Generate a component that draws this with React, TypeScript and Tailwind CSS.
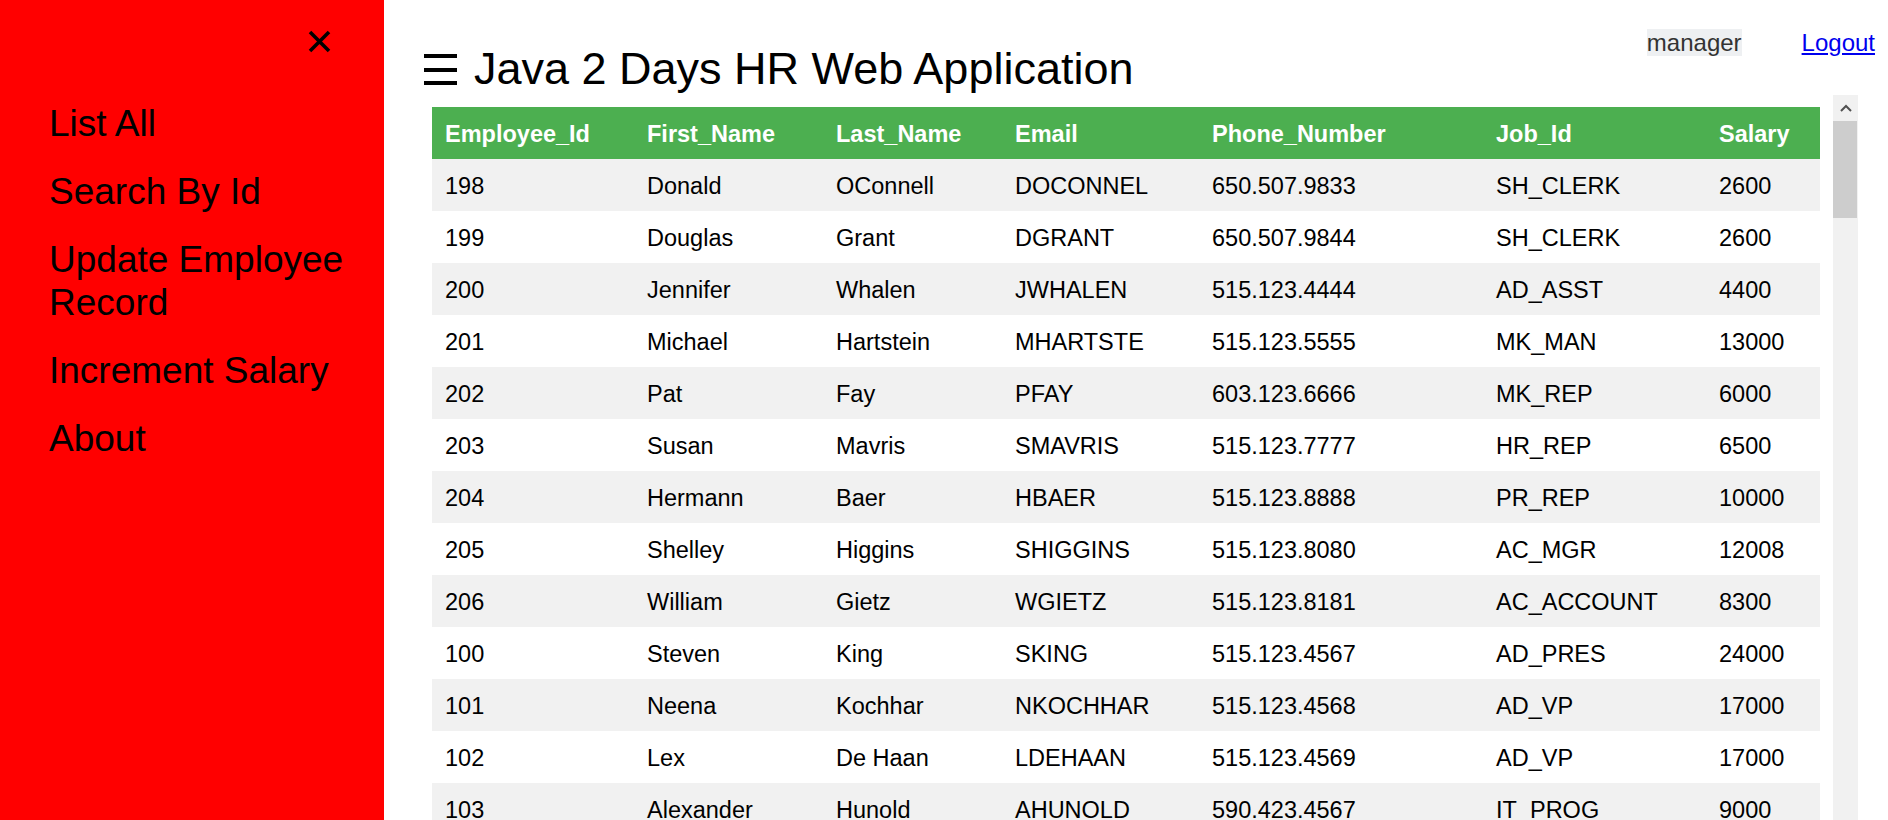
const employees: [string, string, string, string, string, string, string][] = [
  ["198", "Donald", "OConnell", "DOCONNEL", "650.507.9833", "SH_CLERK", "2600"],
  ["199", "Douglas", "Grant", "DGRANT", "650.507.9844", "SH_CLERK", "2600"],
  ["200", "Jennifer", "Whalen", "JWHALEN", "515.123.4444", "AD_ASST", "4400"],
  ["201", "Michael", "Hartstein", "MHARTSTE", "515.123.5555", "MK_MAN", "13000"],
  ["202", "Pat", "Fay", "PFAY", "603.123.6666", "MK_REP", "6000"],
  ["203", "Susan", "Mavris", "SMAVRIS", "515.123.7777", "HR_REP", "6500"],
  ["204", "Hermann", "Baer", "HBAER", "515.123.8888", "PR_REP", "10000"],
  ["205", "Shelley", "Higgins", "SHIGGINS", "515.123.8080", "AC_MGR", "12008"],
  ["206", "William", "Gietz", "WGIETZ", "515.123.8181", "AC_ACCOUNT", "8300"],
  ["100", "Steven", "King", "SKING", "515.123.4567", "AD_PRES", "24000"],
  ["101", "Neena", "Kochhar", "NKOCHHAR", "515.123.4568", "AD_VP", "17000"],
  ["102", "Lex", "De Haan", "LDEHAAN", "515.123.4569", "AD_VP", "17000"],
  ["103", "Alexander", "Hunold", "AHUNOLD", "590.423.4567", "IT_PROG", "9000"],
];

const headers = ["Employee_Id", "First_Name", "Last_Name", "Email", "Phone_Number", "Job_Id", "Salary"];
const menu = ["List All", "Search By Id", "Update Employee Record", "Increment Salary", "About"];

function Sidebar() {
  return (
    <div className="w-[384px] shrink-0 bg-[#ff0000] flex flex-col">
      <div className="flex justify-end pr-[53px] pt-[30px]">
        {/* close button */}
        <svg width="23" height="23" viewBox="0 0 23 23">
          <path d="M2 2 L21 21 M21 2 L2 21" stroke="#000" strokeWidth="3.6" />
        </svg>
      </div>
      <nav className="mt-[37px] flex flex-col">
        {menu.map((m) => (
          <a key={m} href="#" className="block pl-[49px] pr-[8px] pt-[12px] pb-[13px] text-[37px] leading-[43px] text-black">
            {m}
          </a>
        ))}
      </nav>
    </div>
  );
}

function Scrollbar() {
  return (
    <div className="w-[25px] shrink-0 bg-[#f1f1f1] flex flex-col">
      <div className="h-[26px] flex items-center justify-center">
        <svg width="12" height="8" viewBox="0 0 12 8">
          <path d="M1 7 L6 2 L11 7" fill="none" stroke="#505050" strokeWidth="2" />
        </svg>
      </div>
      <div className="h-[97px] mr-[1px] bg-[#cdcdcd]" />
    </div>
  );
}

export default function App() {
  return (
    <div className="h-screen w-full flex overflow-hidden bg-white text-black font-['Liberation_Sans',Arial,sans-serif]">
      <Sidebar />
      <div className="flex-1 min-w-0 flex flex-col pl-[36px] pr-[13px]">
        <div className="flex justify-between items-start">
          <div className="pt-[43px] pl-[4px] flex items-center">
            <svg width="33" height="31" viewBox="0 0 33 31" className="mr-[17px]">
              <rect x="0" y="0" width="33" height="4" fill="#000" />
              <rect x="0" y="14" width="33" height="4" fill="#000" />
              <rect x="0" y="27" width="33" height="4" fill="#000" />
            </svg>
            <h2 className="text-[45px] leading-[52px]">Java 2 Days HR Web Application</h2>
          </div>
          <div className="pt-[29px] flex items-start text-[24px] leading-[27px]">
            <span className="bg-[#eef0f2] text-[#333]">manager</span>
            <a href="#" className="ml-[60px] text-[#0000ee] underline">Logout</a>
          </div>
        </div>

        <div className="mr-[17px] flex flex-1 min-h-0">
          <div className="flex-1 min-w-0 pt-[12px] pl-[12px] pr-[13px] overflow-hidden">
            <table className="w-full table-fixed border-collapse text-[23.5px] leading-[28px]">
              <colgroup>
                <col className="w-[202px]" />
                <col className="w-[189px]" />
                <col className="w-[179px]" />
                <col className="w-[197px]" />
                <col className="w-[284px]" />
                <col className="w-[223px]" />
                <col className="w-[114px]" />
              </colgroup>
              <thead>
                <tr className="bg-[#4caf50] text-white">
                  {headers.map((h) => (
                    <th key={h} className="text-left font-bold px-[13px] pt-[13px] pb-[11px]">
                      {h}
                    </th>
                  ))}
                </tr>
              </thead>
              <tbody>
                {employees.map((e, i) => (
                  <tr key={e[0]} className={i % 2 === 0 ? "bg-[#f1f1f1]" : "bg-white"}>
                    {e.map((c, j) => (
                      <td key={j} className="px-[13px] pt-[13px] pb-[11px] whitespace-nowrap">
                        {c}
                      </td>
                    ))}
                  </tr>
                ))}
              </tbody>
            </table>
          </div>
          <Scrollbar />
        </div>
      </div>
    </div>
  );
}
